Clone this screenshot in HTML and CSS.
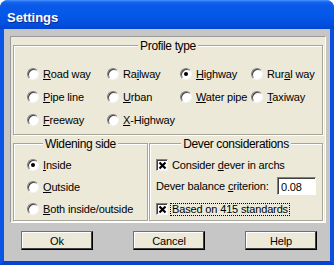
FILE: index.html
```html
<!DOCTYPE html>
<html>
<head>
<meta charset="utf-8">
<link rel="stylesheet" href="styles.css">
</head>
<body>
<div class="window">
  <div class="titlebar"><span class="title">Settings</span></div>
  <div class="frame">
    <div class="panel">
      <div class="group profile">
        <div class="group-title">Profile type</div>
        <div class="radio-grid">
          <div class="opt"><span class="radio"></span><span><u>R</u>oad way</span></div>
          <div class="opt"><span class="radio"></span><span>Ra<u>i</u>lway</span></div>
          <div class="opt"><span class="radio on"></span><span><u>H</u>ighway</span></div>
          <div class="opt"><span class="radio"></span><span>Rur<u>a</u>l way</span></div>
          <div class="opt"><span class="radio"></span><span><u>P</u>ipe line</span></div>
          <div class="opt"><span class="radio"></span><span><u>U</u>rban</span></div>
          <div class="opt"><span class="radio"></span><span><u>W</u>ater pipe</span></div>
          <div class="opt"><span class="radio"></span><span><u>T</u>axiway</span></div>
          <div class="opt"><span class="radio"></span><span><u>F</u>reeway</span></div>
          <div class="opt"><span class="radio"></span><span><u>X</u>-Highway</span></div>
        </div>
      </div>
      <div class="lower">
        <div class="group widening">
          <div class="group-title">Widening side</div>
          <div class="radio-list">
            <div class="opt"><span class="radio on"></span><span><u>I</u>nside</span></div>
            <div class="opt"><span class="radio"></span><span><u>O</u>utside</span></div>
            <div class="opt"><span class="radio"></span><span><u>B</u>oth inside/outside</span></div>
          </div>
        </div>
        <div class="group dever">
          <div class="group-title">Dever considerations</div>
          <div class="dever-body">
            <div class="opt row1"><span class="check"><svg width="9" height="9" viewBox="0 0 9 9"><path d="M1.5 1.5 L7.5 7.5 M7.5 1.5 L1.5 7.5" stroke="#000" stroke-width="2.2" fill="none"/></svg></span><span>Consider <u>d</u>ever in archs</span></div>
            <div class="row2"><span>Dever balance <u>c</u>riterion:</span><input class="field" type="text" value="0.08"></div>
            <div class="opt row3"><span class="check"><svg width="9" height="9" viewBox="0 0 9 9"><path d="M1.5 1.5 L7.5 7.5 M7.5 1.5 L1.5 7.5" stroke="#000" stroke-width="2.2" fill="none"/></svg></span><span class="focus">Based on 415 standards</span></div>
          </div>
        </div>
      </div>
    </div>
    <div class="buttons">
      <button class="btn">Ok</button>
      <button class="btn">Cancel</button>
      <button class="btn">Help</button>
    </div>
  </div>
</div>
</body>
</html>
```
FILE: styles.css
```css
html, body {
  margin: 0;
  padding: 0;
  background: #ffffff;
}
body {
  font-family: "Liberation Sans", Arial, sans-serif;
  font-size: 11px;
  letter-spacing: -0.15px;
  color: #000;
}
.window {
  width: 334px;
  height: 265px;
  border-radius: 8px 8px 0 0;
  overflow: hidden;
  background: #0a4fe0;
  display: flex;
  flex-direction: column;
}
.titlebar {
  height: 29px;
  box-sizing: border-box;
  padding: 10px 0 0 7px;
  background: linear-gradient(to bottom, #4a95ff 0, #1667f0 2px, #0a5ae8 5px, #0558ea 14px, #0352e2 22px, #0046d2 29px);
}
.title {
  font-family: "Liberation Sans", Arial, sans-serif;
  font-weight: bold;
  font-size: 13px;
  letter-spacing: 0;
  line-height: 16px;
  color: #fff;
  text-shadow: 1px 1px 0 #0a2a90;
}
.frame {
  height: 236px;
  box-sizing: border-box;
  border-left: 4px solid #0b55e6;
  border-right: 4px solid #0b4fe0;
  border-bottom: 4px solid #0843cf;
  background: #c6c6c6;
  padding-top: 7px;
}
.panel {
  width: 316px;
  box-sizing: border-box;
  margin-left: 6px;
  border: 1px solid;
  border-color: #9a9a9a #ffffff #ffffff #9a9a9a;
  background: #ece9d8;
  padding: 8px 2px 1px;
}
.group {
  box-sizing: border-box;
  border: 1px solid #a6a598;
  box-shadow: inset 1px 1px 0 #fff, 1px 1px 0 #fff;
}
.group-title {
  width: max-content;
  margin: -7px auto 0;
  padding: 0 2px;
  background: #ece9d8;
  line-height: 14px;
  font-size: 12px;
  letter-spacing: -0.35px;
}
.profile {
  height: 90px;
}
.radio-grid {
  margin-top: 9px;
  padding-left: 13px;
  display: grid;
  grid-template-columns: 80px 73px 71px 1fr;
  grid-auto-rows: 23px;
  align-items: center;
}
.opt {
  display: flex;
  align-items: center;
  gap: 4px;
  line-height: 14px;
  white-space: nowrap;
}
.radio {
  width: 12px;
  height: 12px;
  box-sizing: border-box;
  border-radius: 50%;
  border: 1px solid;
  border-color: #808080 #f4f4f4 #f4f4f4 #808080;
  box-shadow: inset 1px 1px 0 #404040;
  background: #fff;
  display: inline-flex;
  align-items: center;
  justify-content: center;
  flex: none;
}
.radio.on::after {
  content: "";
  width: 4px;
  height: 4px;
  border-radius: 50%;
  background: #000;
}
.lower {
  display: flex;
  gap: 1px;
  margin-top: 8px;
  height: 78px;
}
.widening {
  width: 135px;
  flex: none;
}
.dever {
  flex: 1;
}
.radio-list {
  margin-top: 3px;
  padding-left: 13px;
  display: grid;
  grid-auto-rows: 22px;
  align-items: center;
}
.dever-body {
  margin-top: 3px;
  padding: 0 6px 0 6px;
}
.row1 {
  height: 22px;
}
.row2 {
  height: 20px;
  display: flex;
  align-items: center;
  justify-content: space-between;
  line-height: 14px;
}
.row3 {
  height: 22px;
  margin-top: 2px;
  gap: 2px;
}
.check {
  width: 12px;
  height: 12px;
  box-sizing: border-box;
  border: 1px solid;
  border-color: #808080 #f4f4f4 #f4f4f4 #808080;
  box-shadow: inset 1px 1px 0 #404040;
  background: #fff;
  display: inline-flex;
  align-items: center;
  justify-content: center;
  flex: none;
}
.check svg {
  display: block;
  margin: 1px 0 0 1px;
}
.focus {
  border: 1px dotted #000;
  padding: 0 1px;
  line-height: 11px;
}
.field {
  width: 39px;
  height: 18px;
  box-sizing: border-box;
  margin: 0;
  border: 1px solid;
  border-color: #808080 #fff #fff #808080;
  box-shadow: inset 1px 1px 0 #404040;
  background: #fff;
  font-family: inherit;
  font-size: 11px;
  letter-spacing: -0.15px;
  padding: 1px 2px 0 3px;
  outline: none;
}
.buttons {
  display: flex;
  gap: 40px;
  padding-left: 17px;
  margin-top: 8px;
}
.btn {
  width: 72px;
  height: 19px;
  box-sizing: border-box;
  margin: 0;
  padding: 0;
  font-family: inherit;
  font-size: 11px;
  letter-spacing: -0.15px;
  color: #000;
  background: #ece9d8;
  border: 1px solid #000;
  border-top-color: #707070;
  border-left-color: #707070;
  box-shadow: inset -1px -1px 0 #404040, inset 1px 1px 0 #fff;
}
```
